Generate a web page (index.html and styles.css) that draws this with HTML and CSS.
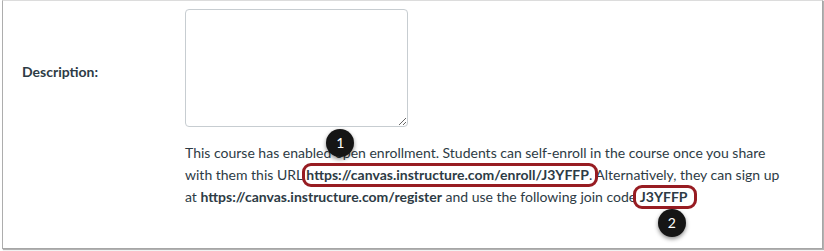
FILE: index.html
```html
<!DOCTYPE html>
<html>
<head>
	<meta charset="utf-8">
	<meta name="viewport" content="width=device-width, initial-scale=1">
	<title>Course Details</title>
	<link rel="stylesheet" href="styles.css">
</head>
<body>
	<div class="panel">
		<div class="form-row">
			<label class="field-label" for="description">Description:</label>
			<div class="field">
				<textarea class="desc-input" id="description"></textarea>
				<p class="help-text">This course has enabled open enrollment. Students can self-enroll in the course once you share with them this URL <span class="callout callout-url"><b>https://canvas.instructure.com/enroll/J3YFFP</b>.<span class="badge badge-top">1</span></span> Alternatively, they can sign up at <b>https://canvas.instructure.com/register</b> and use the following join code <span class="callout callout-code"><b>J3YFFP</b><span class="badge badge-bottom">2</span></span></p>
			</div>
		</div>
	</div>
</body>
</html>
```

FILE: styles.css
```css
*{
	margin: 0;
	padding: 0;
	box-sizing: border-box;
}
body{
	width: 824px;
	height: 251px;
	background: white;
	font-family: Lato, "Open Sans", sans-serif;
	color: #2d3b45;
	overflow: hidden;
}
.panel{
	width: 821px;
	height: 249px;
	margin-left: 2px;
	background: white;
	border: 1px solid #dcdcdc;
	border-left-color: #adadad;
	border-right-color: #a6a6a6;
	border-bottom-color: #a6a6a6;
	box-shadow: 1px 1px 1px rgba(0,0,0,.3);
}
.form-row{
	display: flex;
	align-items: flex-start;
}
.field-label{
	width: 182px;
	padding: 61px 0 0 19px;
	font-size: 14px;
	font-weight: bold;
	line-height: 20px;
}
.field{
	padding-top: 8px;
}
.desc-input{
	display: block;
	width: 223px;
	height: 118px;
	border: 1px solid #c7cdd1;
	border-radius: 4px;
	background: white;
	font-family: inherit;
	font-size: 14px;
	resize: vertical;
}
.help-text{
	width: 600px;
	margin-top: 15px;
	font-size: 14px;
	line-height: 22px;
}
.help-text b{
	font-weight: bold;
}
.callout{
	position: relative;
}
.callout::after{
	content: "";
	position: absolute;
	left: -4px;
	right: -6px;
	top: -3px;
	bottom: -4px;
	border: 3px solid #971c22;
	border-radius: 9px;
}
.callout-code::after{
	left: -7px;
	right: -9px;
}
.badge{
	position: absolute;
	z-index: 1;
	width: 28px;
	height: 28px;
	border-radius: 50%;
	background: #151515;
	color: white;
	font-size: 14px;
	font-weight: normal;
	line-height: 28px;
	text-align: center;
	box-shadow: 0 2px 4px rgba(0,0,0,.45);
}
.badge-top{
	left: 20px;
	top: -37px;
}
.badge-bottom{
	left: 18px;
	top: 21px;
}
```
